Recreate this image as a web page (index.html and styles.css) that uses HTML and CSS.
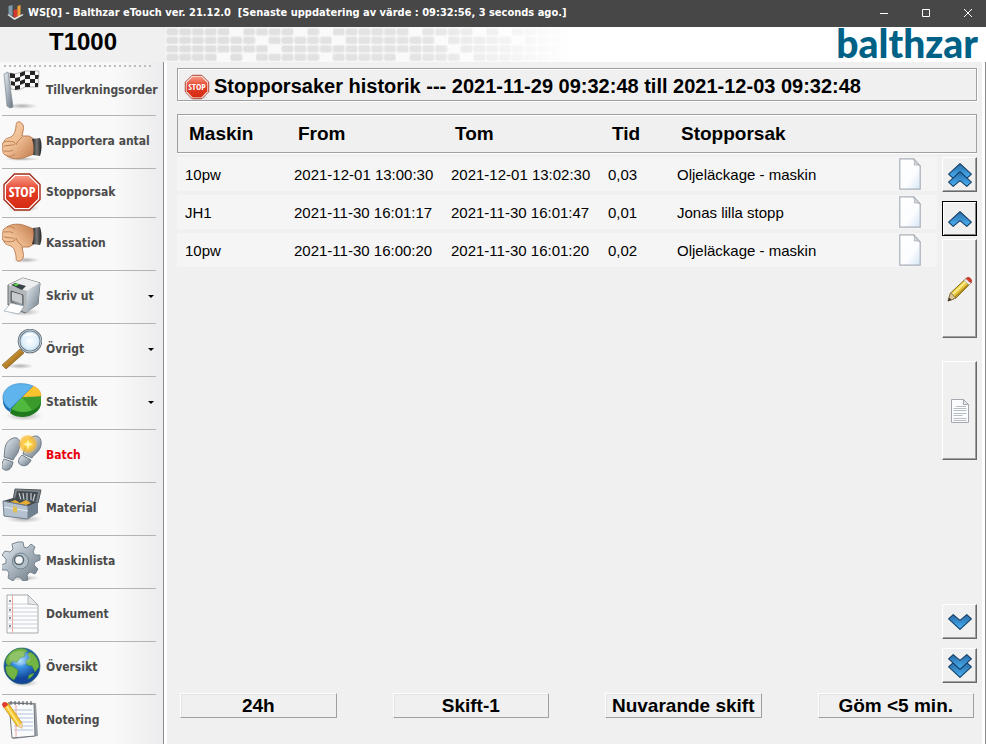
FILE: index.html
```html
<!DOCTYPE html>
<html lang="sv">
<head>
<meta charset="utf-8">
<title>Balthzar eTouch</title>
<link rel="stylesheet" href="styles.css">
</head>
<body>
<svg class="defs" aria-hidden="true">
  <defs>
    <linearGradient id="red" x1="0" y1="0" x2="0" y2="1"><stop offset="0" stop-color="#f79a86"/><stop offset=".45" stop-color="#e5402a"/><stop offset="1" stop-color="#d42a10"/></linearGradient>
    <linearGradient id="skin" x1="0" y1="0" x2="1" y2="1"><stop offset="0" stop-color="#f8d5b0"/><stop offset=".5" stop-color="#efbd92"/><stop offset="1" stop-color="#c07a4c"/></linearGradient>
    <linearGradient id="metal" x1="0" y1="0" x2="1" y2="1"><stop offset="0" stop-color="#e9eef2"/><stop offset=".5" stop-color="#a9b4be"/><stop offset="1" stop-color="#66727e"/></linearGradient>
    <linearGradient id="cuff" x1="0" y1="0" x2="1" y2="0"><stop offset="0" stop-color="#222"/><stop offset=".5" stop-color="#777"/><stop offset="1" stop-color="#222"/></linearGradient>
    <linearGradient id="sheet" x1="0" y1="0" x2="1" y2="1"><stop offset="0" stop-color="#fff"/><stop offset=".6" stop-color="#fcfdff"/><stop offset="1" stop-color="#d5e5f5"/></linearGradient>
    <linearGradient id="blue" x1="0" y1="0" x2="0" y2="1"><stop offset="0" stop-color="#2a6ba6"/><stop offset="1" stop-color="#48b2f6"/></linearGradient>
    <linearGradient id="wood" x1="0" y1="0" x2="1" y2="1"><stop offset="0" stop-color="#f3cf7d"/><stop offset=".5" stop-color="#b98228"/><stop offset="1" stop-color="#6b4312"/></linearGradient>
    <radialGradient id="lens"><stop offset="0" stop-color="#fff"/><stop offset=".7" stop-color="#dceefa"/><stop offset="1" stop-color="#a9cbe2"/></radialGradient>
    <radialGradient id="sea" cx=".45" cy=".35"><stop offset="0" stop-color="#a5dcff"/><stop offset=".4" stop-color="#3a8fe0"/><stop offset="1" stop-color="#12469b"/></radialGradient>
    <radialGradient id="spark"><stop offset="0" stop-color="#fff9c8"/><stop offset=".3" stop-color="#ffcf3d"/><stop offset=".75" stop-color="#f8b830" stop-opacity=".75"/><stop offset="1" stop-color="#ffc845" stop-opacity="0"/></radialGradient>
    <radialGradient id="shade"><stop offset="0" stop-color="#777" stop-opacity=".6"/><stop offset="1" stop-color="#999" stop-opacity="0"/></radialGradient>
    <linearGradient id="fade" x1="0" y1="0" x2="1" y2="0"><stop offset="0" stop-color="#fff" stop-opacity="0"/><stop offset=".6" stop-color="#fff" stop-opacity=".15"/><stop offset=".97" stop-color="#fff"/></linearGradient>
    <pattern id="cells" width="12.8" height="8.5" patternUnits="userSpaceOnUse"><rect x=".5" y="1.500" width="11.6" height="6.800" rx="2.200" fill="#dfdfdf"/></pattern>
    <symbol id="stop" viewBox="0 0 40 40">
      <ellipse cx="21" cy="36" rx="17" ry="4" fill="url(#shade)"/>
      <path d="M12.500 2h15L38 12.500v15L27.500 38h-15L2 27.500v-15z" fill="#fff" stroke="#a32c1b" stroke-width="1.400"/>
      <path d="M13.300 4h13.400L36 13.300v13.400L26.700 36H13.300L4 26.700V13.300z" fill="url(#red)"/>
      <text x="20" y="25" text-anchor="middle" class="stop-text">STOP</text>
    </symbol>
    <symbol id="hand" viewBox="0 0 40 40">
      <path d="M2 21c0-3 4-4 7-5 4-3 4-6 5-10 0-4 1-6 4-5 4 2 4 6 3 9l-1 5h7l5 3v15l-8 3c-7 3-15 2-19-1-4-2-4-3-4-5-1-2-1-3 0-4-1-2-1-4 1-5z" fill="url(#skin)" stroke="#b5754a" stroke-width=".9"/>
      <path d="M2 21c3-1 7-1 10 0 2 1 1 3-2 3l-8 1m0 5c3 0 6 1 9-1m-6 6c3 1 6 0 8-2m7-17c-3 3-5 5-6 8" fill="none" stroke="#bf8055" stroke-width="1"/>
      <path d="M30 18l8-1c2 4 2 12 0 18l-7-1c1-5 1-10-1-16z" fill="url(#cuff)"/>
    </symbol>
    <symbol id="doc" viewBox="0 0 22 32">
      <path d="M.8.800h14L21.200 8v23.200H.8z" fill="url(#sheet)" stroke="#a9b0b8" stroke-width="1.200"/>
      <path d="M14.500.800 21.200 8c-2-1-4-1.300-6-1 .5-2 .3-4-.7-6.200z" fill="#d4d7da" stroke="#a9b0b8" stroke-width=".8"/>
    </symbol>
    <symbol id="chev-up" viewBox="0 0 24 16">
      <path d="M12 .6 23.400 11.200 18.800 15.400 12 9.600 5.200 15.400.6 11.200z" fill="url(#blue)" stroke="#153f68" stroke-width="1.100" stroke-linejoin="round"/>
    </symbol>
    <symbol id="chev-down" viewBox="0 0 24 16">
      <path d="M12 15.400.6 4.800 5.200.6 12 6.400 18.800.6 23.400 4.800z" fill="url(#blue)" stroke="#153f68" stroke-width="1.100" stroke-linejoin="round"/>
    </symbol>
    <symbol id="pencil" viewBox="0 0 26 26">
      <path d="M1 25 3.500 17 19 2.500 24 7 9 22z" fill="#e7c53a" stroke="#7e6316" stroke-width=".9"/>
      <path d="M5.500 18.500 19 5.500" stroke="#fbec8c" stroke-width="2"/>
      <path d="M8 21 22 8" stroke="#a9851e" stroke-width="1.200"/>
      <path d="M1 25 3.500 17l2 1 1 2 2.500 2z" fill="#dcc59b" stroke="#6d5a35" stroke-width=".6"/>
      <path d="M1 25l1-3.500L4.500 24z" fill="#333"/>
      <path d="M17 4.500 19.500 2 24.500 6.500 22 9z" fill="#eee" stroke="#999" stroke-width=".6"/>
      <path d="M19.500 2c2-2 6 1 5 4.500L22.500 6l-3-3z" fill="#dc3a2a" stroke="#a42718" stroke-width=".6"/>
    </symbol>
  </defs>
</svg>

<header class="titlebar">
  <svg class="app-icon" viewBox="0 0 16 18" aria-hidden="true"><path d="M1 2l4-1v11l-4-2z" fill="#7d9bab"/><path d="M6 6l4-1v9l-4-1z" fill="#d8382a"/><path d="M10 2l3-1v11l-3 2z" fill="#f0a13a"/><path d="M0 11l7 5 9-5-1-1-8 4-6-4z" fill="#dfe3e6"/></svg>
  <h1>WS[0] - Balthzar eTouch ver. 21.12.0 &nbsp;[Senaste uppdatering av värde : 09:32:56, 3 seconds ago.]</h1>
  <div class="window-controls">
    <button type="button" aria-label="Minimera"><svg viewBox="0 0 10 10"><path d="M1 5.500h8"/></svg></button>
    <button type="button" aria-label="Maximera"><svg viewBox="0 0 10 10"><path d="M1.500 1.500h7v7h-7z"/></svg></button>
    <button type="button" aria-label="Stäng"><svg viewBox="0 0 10 10"><path d="M1 1l8 8M9 1 1 9"/></svg></button>
  </div>
</header>

<div class="banner">
  <div class="station">T1000</div>
  <svg class="pattern" viewBox="0 0 420 35" aria-hidden="true">
    <rect width="420" height="35" fill="#f5f5f5"/>
    <rect width="420" height="35" fill="url(#cells)"/>
    <g fill="#f9f9f9">
      <path d="M64 0h13v9H64zM128 0h13v9h-13zM154 0h13v9h-13zM243 0h13v9h-13zM307 0h13v9h-13zM333 0h13v9h-13z"/>
      <path d="M90 9h12v9H90zM166 9h13v9h-13zM269 9h13v9h-13zM346 9h13v9h-13z"/>
      <path d="M102 18h13v8h-13zM282 18h12v8h-12z"/>
      <path d="M51 26h13v9H51zM77 26h13v9H77zM154 26h12v9h-12zM230 26h13v9h-13zM294 26h13v9h-13z"/>
    </g>
    <rect width="420" height="35" fill="url(#fade)"/>
  </svg>
  <div class="brand">balthzar</div>
</div>

<div class="workspace">
  <nav class="sidebar" aria-label="Meny">
    <button type="button" class="item compact">
      <svg viewBox="0 0 40 40"><ellipse cx="20" cy="36" rx="16" ry="3" fill="url(#shade)"/><path d="M2 4l4-2 5 35-3 1-3-2z" fill="url(#metal)" stroke="#7c8790" stroke-width=".7"/><path d="M7 3l6 1 10-3 14 0-1 16-13 0-6 3-8-1z" fill="#f7f7f7" stroke="#777" stroke-width=".5"/><path d="M8 3l5 1v4H8zM9 11l4 1v4l-4-1zM13 8l5-1v4l-5 1zM13 16l5-1v4l-5 1zM18 3l5-2v4l-5 2zM18 11l5-2v4l-5 2zM23 5h5v4h-5zM23 13h5v4h-5zM28 1h5v4h-5zM28 9h5v4h-5zM33 5h4l-1 4h-3zM33 13h3v4h-3z" fill="#242424"/></svg>
      <span>Tillverkningsorder</span></button>
    <button type="button" class="item"><svg viewBox="0 0 40 40"><ellipse cx="20" cy="38" rx="18" ry="2" fill="url(#shade)"/><use href="#hand"/></svg><span>Rapportera antal</span></button>
    <button type="button" class="item compact"><svg viewBox="0 0 40 40"><use href="#stop"/></svg><span>Stopporsak</span></button>
    <button type="button" class="item"><svg viewBox="0 0 40 40"><ellipse cx="24" cy="37" rx="14" ry="3" fill="url(#shade)"/><g transform="matrix(1 0 0 -1 0 39)"><use href="#hand" width="40" height="40"/></g></svg><span>Kassation</span></button>
    <button type="button" class="item">
      <svg viewBox="0 0 40 40"><ellipse cx="22" cy="36" rx="17" ry="4" fill="url(#shade)"/><path d="M6 9 21 2l17 5-2 21-13 9L6 29z" fill="#b5b8ba" stroke="#686d70"/><path d="M6 9 21 2l17 5-13 8z" fill="#eceeef"/><path d="M25 15 38 7l-2 21-12 9z" fill="url(#metal)"/><path d="M9 9l4-2 11 3-4 4z" fill="#374349"/><path d="M11 8.500l4-1 2 1-3 1.500z" fill="#59e237"/><path d="M9 15l12 4v12L9 26z" fill="#8d9397" stroke="#555"/><path d="M10 16l10 3v9l-10-4z" fill="#c9ccce"/><path d="M9 27l13 3-5 8-15-3z" fill="#fff" stroke="#95a5b2" stroke-width=".7"/></svg>
      <span>Skriv ut</span><i class="caret"></i></button>
    <button type="button" class="item">
      <svg viewBox="0 0 40 40"><ellipse cx="18" cy="37" rx="14" ry="3" fill="url(#shade)"/><path d="M18 20 22 24 4 40 0 36z" fill="url(#wood)" stroke="#77501a" stroke-width=".6"/><path d="M20 18l3-3 3 3-3 4z" fill="#777"/><circle cx="28" cy="12" r="11" fill="url(#lens)" stroke="#667580" stroke-width="2.600"/><circle cx="28" cy="12" r="11" fill="none" stroke="#c5d0d7" stroke-width="1"/><path d="M20 9c3-6 12-7 16-1-5-2-11-2-16 1z" fill="#fff" opacity=".9"/></svg>
      <span>Övrigt</span><i class="caret"></i></button>
    <button type="button" class="item">
      <svg viewBox="0 0 40 40"><ellipse cx="22" cy="34" rx="19" ry="5" fill="url(#shade)"/><path d="M39 15v6c0 7-7 13-18 14-5 0-9-1-13-4l2-8z" fill="#1f7a1d"/><path d="M20 15l19 0c1 8-7 15-18 15-4 0-8-1-12-3z" fill="#4fb83d"/><path d="M20 15 39 14c1 9-6 13-9 14z" fill="#3a9a2c"/><path d="M20 15 31 4c5 2 8 5 8 10z" fill="#fbc42f" stroke="#d99a16" stroke-width=".5"/><path d="M1 15v6c1 4 3 7 7 9l1-3 11-12z" fill="#1d6fb5"/><path d="M20 15 8 27C-4 19 0 5 14 2c6-1 13 0 17 2z" fill="#5fb4ee" stroke="#3384c5" stroke-width=".6"/></svg>
      <span>Statistik</span><i class="caret"></i></button>
    <button type="button" class="item alert">
      <svg viewBox="0 0 40 40"><g fill="url(#metal)" stroke="#65737e" stroke-width=".9"><path d="M9 4c7-4 11 2 8 10-1 5-4 7-6 11L2 22C3 15 2 8 9 4z"/><path d="M2 24l9 3c-1 6-4 9-8 8s-4-5-1-11z"/><path d="M30 2c6-3 10 1 9 8-1 7-7 9-9 13l-9-4c2-6 2-13 9-17z"/><path d="M20 20l9 5c-2 5-6 7-10 5s-3-6 1-10z"/></g><circle cx="26" cy="9" r="10" fill="url(#spark)"/><path d="M26 4l1 4 4 1-4 2-1 4-1-4-4-2 4-1z" fill="#fff7b0"/></svg>
      <span>Batch</span></button>
    <button type="button" class="item">
      <svg viewBox="0 0 40 40"><ellipse cx="22" cy="31" rx="19" ry="4" fill="url(#shade)"/><path d="M13 1 39 2l-3 13-25-3z" fill="#7d858c" stroke="#535a60"/><path d="M15 3l21 1-2 9-21-2z" fill="#424a50"/><path d="M17 5l2 7M21 5l1 7M25 5v8M29 5v7M33 6l-2 7" stroke="#c5ccd2" stroke-width="1.200"/><path d="M1 13l10-3 25 4-10 5z" fill="#454b4f"/><path d="M8 14l5-2 5 3 6-3 5 3-5 2z" fill="#e8ae34"/><path d="M1 13l25 5v13L2 28z" fill="#b4c2d0" stroke="#6f7e8c"/><path d="M26 18l10-4v11l-10 6z" fill="#71808e"/><path d="M2 19l24 4" stroke="#e4ebf2"/><path d="M11 18l4 1v6l-4-1z" fill="#dfbf52"/></svg>
      <span>Material</span></button>
    <button type="button" class="item">
      <svg viewBox="0 0 40 40"><ellipse cx="22" cy="37" rx="16" ry="3" fill="url(#shade)"/><path d="M16 1l5 0 1 5 3 1 4-4 4 3-2 5 2 3 5 0 0 5-5 2-1 3 4 4-3 5-5-2-3 3 1 5-5 1-3-4-4 0-3 4-5-3 1-5-2-3-5 0-1-5 5-2 0-4-4-4 3-4 5 1 3-3-1-5z" fill="url(#metal)" stroke="#6e7d88" stroke-width=".9"/><circle cx="18.500" cy="20" r="8" fill="#b3bfc8" stroke="#73828e"/><circle cx="17" cy="19" r="4.500" fill="#f6f8f9" stroke="#586670" stroke-width="1.500"/></svg>
      <span>Maskinlista</span></button>
    <button type="button" class="item">
      <svg viewBox="0 0 40 40"><path d="M5 1h21l10 10v28H5z" fill="#fdfdfe" stroke="#a5a9ad"/><path d="M6 10h22M6 14h29M6 18h29M6 22h29M6 26h29M6 30h29M6 34h29" stroke="#bfcbd8" stroke-width=".9"/><path d="M10.500 1v38" stroke="#eea8a0"/><path d="M26 1v9l10 1z" fill="#e6e8ea" stroke="#a5a9ad" stroke-width=".8"/><path d="M7 6h2v2H7zM7 15h2v2H7zM7 23h2v2H7zM7 31h2v2H7z" fill="#8c9298"/></svg>
      <span>Dokument</span></button>
    <button type="button" class="item">
      <svg viewBox="0 0 40 40"><ellipse cx="22" cy="36" rx="15" ry="4" fill="url(#shade)"/><circle cx="20" cy="19" r="18" fill="url(#sea)" stroke="#2a6073" stroke-width=".7"/><path d="M4 12C8 4 15 0 23 2l3 2-4 2 1 3-5 2-3 4-5-1-2 5c-3 0-5-3-4-7zM4 19l6 0 6 4-1 5-3 5C6 30 3 25 4 19zM27 5c6 1 10 8 10 15l-4 5-3-6-5-1-1-4 4-3-2-3zM27 28l5-2c-1 3-3 5-6 6z" fill="#73b544" stroke="#3e8a35" stroke-width=".6"/><ellipse cx="18" cy="11" rx="11" ry="7" fill="#fff" opacity=".2"/></svg>
      <span>Översikt</span></button>
    <button type="button" class="item">
      <svg viewBox="0 0 40 40"><path d="M6 2 34 3l2 33-25 3z" fill="#9aa0a5"/><path d="M7 3l25 1 1 32-23 2z" fill="#fafbfc" stroke="#70767b"/><path d="M11 10h19M11 14h20M11 18h20M12 22h19M12 26h19M12 30h19" stroke="#b3c4dc"/><path d="M14 5v32" stroke="#eda7a0"/><path d="M9 1v4M13 1v4M17 1v4M21 1v4M25 1v4M29 1v4" stroke="#555"/><path d="M1 6 6 3l14 20 0 5-5-2z" fill="#f7c52f" stroke="#c38a12" stroke-width=".7"/><path d="M4 5l13 20" stroke="#fde98a" stroke-width="1.500"/><path d="M15 26l5-3 1 6z" fill="#ecd2a4"/><path d="M0 5c0-3 3-4 5-2l1 2-4 3z" fill="#e23c2c"/></svg>
      <span>Notering</span></button>
  </nav>

  <main class="main">
    <h2 class="panel-title">
      <svg viewBox="0 0 40 40" aria-hidden="true"><use href="#stop"/></svg>
      Stopporsaker historik --- 2021-11-29 09:32:48 till 2021-12-03 09:32:48
    </h2>
    <div class="history">
      <table>
        <colgroup><col class="c-machine"><col class="c-date"><col class="c-date"><col class="c-time"><col><col class="c-doc"><col class="c-tools"></colgroup>
        <thead>
          <tr><th>Maskin</th><th>From</th><th>Tom</th><th>Tid</th><th>Stopporsak</th><th></th><th></th></tr>
        </thead>
        <tbody>
          <tr><td>10pw</td><td>2021-12-01 13:00:30</td><td>2021-12-01 13:02:30</td><td>0,03</td><td>Oljeläckage - maskin</td><td><button type="button" class="note" aria-label="Notering"><svg viewBox="0 0 22 32"><use href="#doc"/></svg></button></td><td></td></tr>
          <tr><td>JH1</td><td>2021-11-30 16:01:17</td><td>2021-11-30 16:01:47</td><td>0,01</td><td>Jonas lilla stopp</td><td><button type="button" class="note" aria-label="Notering"><svg viewBox="0 0 22 32"><use href="#doc"/></svg></button></td><td></td></tr>
          <tr><td>10pw</td><td>2021-11-30 16:00:20</td><td>2021-11-30 16:01:20</td><td>0,02</td><td>Oljeläckage - maskin</td><td><button type="button" class="note" aria-label="Notering"><svg viewBox="0 0 22 32"><use href="#doc"/></svg></button></td><td></td></tr>
        </tbody>
      </table>
      <div class="tools">
        <button type="button" class="tool" aria-label="Första"><svg viewBox="0 0 24 26"><use href="#chev-up" y="1" width="24" height="16"/><use href="#chev-up" y="9" width="24" height="16"/></svg></button>
        <button type="button" class="tool current" aria-label="Upp"><svg viewBox="0 0 24 26"><use href="#chev-up" y="5" width="24" height="16"/></svg></button>
        <button type="button" class="tool tall" aria-label="Redigera"><svg viewBox="0 0 26 26"><use href="#pencil"/></svg></button>
        <button type="button" class="tool tall text" aria-label="Visa text"><svg viewBox="0 0 24 26"><path d="M3.500 1.500h12l5 5v18h-17z" fill="#fbfcfd" stroke="#a3a9af"/><path d="M15.500 1.500v5h5z" fill="#e4e7ea" stroke="#a3a9af"/><path d="M8 8.500h10M5.500 10.500h13M5.500 12.500h13M5.500 15.500h13M5.500 17.500h9M5.500 20.500h13M5.500 22.500h13" stroke="#b9bec4"/></svg></button>
        <button type="button" class="tool down" aria-label="Ned"><svg viewBox="0 0 24 26"><use href="#chev-down" y="5" width="24" height="16"/></svg></button>
        <button type="button" class="tool" aria-label="Sista"><svg viewBox="0 0 24 26"><use href="#chev-down" y="9" width="24" height="16"/><use href="#chev-down" y="1" width="24" height="16"/></svg></button>
      </div>
    </div>
    <div class="filters">
      <button type="button">24h</button>
      <button type="button">Skift-1</button>
      <button type="button">Nuvarande skift</button>
      <button type="button">Göm &lt;5 min.</button>
    </div>
  </main>
</div>
</body>
</html>
```
FILE: styles.css
```css
* {
  box-sizing: border-box;
}

body {
  margin: 0;
  height: 100vh;
  overflow: hidden;
  display: flex;
  flex-direction: column;
  background: #f0f0f0;
  color: #000;
  font-family: "Liberation Sans", Arial, sans-serif;
}

button {
  font: inherit;
  color: inherit;
  padding: 0;
  border: 0;
  background: none;
}

svg {
  display: block;
}

.defs {
  position: absolute;
  width: 0;
  height: 0;
}

.stop-text {
  font: bold 14px "Liberation Sans Narrow", "Open Sans Condensed", Lato, sans-serif;
  fill: #fff;
}

/* Title bar */
.titlebar {
  flex: none;
  display: flex;
  align-items: center;
  gap: 4px;
  height: 27px;
  padding: 0 0 2px 7px;
  background: #474747;
  color: #fff;
}

.titlebar h1 {
  flex: 1;
  margin: 0;
  font: bold 11px "DejaVu Sans Condensed", "DejaVu Sans", sans-serif;
  white-space: nowrap;
}

.app-icon {
  width: 17px;
  height: 18px;
}

.window-controls {
  display: flex;
}

.window-controls button {
  display: grid;
  place-items: center;
  width: 42px;
  height: 24px;
}

.window-controls button:last-child {
  width: 36px;
  margin-left: 3px;
}

.window-controls svg {
  width: 10px;
  height: 10px;
  fill: none;
  stroke: #fff;
}

/* Banner */
.banner {
  flex: none;
  display: flex;
  height: 35px;
  padding-right: 8px;
  background: #fff;
}

.station {
  width: 166px;
  background: #f0f0f0;
  text-align: center;
  font-size: 24px;
  font-weight: bold;
  line-height: 30px;
}

.pattern {
  width: 420px;
  height: 35px;
}

.brand {
  margin-left: auto;
  color: #006187;
  font: 900 39px Lato, sans-serif;
  line-height: 33px;
}

/* Workspace */
.workspace {
  flex: 1;
  min-height: 0;
  display: flex;
  border-right: 1px solid #8a8a8a;
}

.sidebar {
  flex: none;
  width: 164px;
  padding: 3px 7px 0 2px;
  border-right: 1px solid #8c8c90;
  background: linear-gradient(to right, #f9f9f9 70%, #ececee);
}

.sidebar::before {
  content: "";
  display: block;
  height: 2px;
  margin: 0 5px 0 2px;
  background: repeating-linear-gradient(to right, #bdbdbd 0 2px, transparent 2px 5px);
}

.item {
  display: flex;
  align-items: center;
  gap: 4px;
  width: 100%;
  height: 53px;
  padding-bottom: 2px;
  border-bottom: 1px solid #b4b4b4;
  color: #4b4b4b;
  font: bold 12px "DejaVu Sans Condensed", "DejaVu Sans", sans-serif;
  white-space: nowrap;
}

.item svg {
  flex: none;
  width: 40px;
  height: 40px;
}

.compact {
  height: 49px;
}

.alert {
  color: #e8000c;
}

.caret {
  margin-left: auto;
  margin-right: 2px;
  border: 3px solid transparent;
  border-top-color: #000;
  border-bottom: 0;
}

/* Main panel */
.main {
  flex: 1;
  min-width: 0;
  display: flex;
  flex-direction: column;
  padding: 6px 5px 26px 10px;
  border-left: 3px solid #fff;
  border-right: 3px solid #fff;
}

.panel-title {
  flex: none;
  display: flex;
  align-items: center;
  gap: 4px;
  height: 33px;
  margin: 0 0 9px;
  padding: 4px 6px 0;
  border: 1px solid #a0a0a0;
  box-shadow: inset 1px 1px #fff, 1px 1px #fff;
  font-size: 20px;
  white-space: nowrap;
}

.panel-title svg {
  width: 26px;
  height: 26px;
}

.history {
  flex: 1;
  min-height: 0;
  display: grid;
  grid-template-columns: 1fr 35px;
}

table {
  grid-area: 1 / 1 / 2 / 3;
  align-self: start;
  width: 100%;
  table-layout: fixed;
  border-collapse: separate;
  border-spacing: 0 4px;
  text-align: left;
}

.c-machine {
  width: 109px;
}

.c-date {
  width: 157px;
}

.c-time {
  width: 69px;
}

.c-doc {
  width: 47px;
}

.c-tools {
  width: 40px;
}

th {
  height: 39px;
  padding: 0 12px;
  border: solid #a0a0a0;
  border-width: 1px 0;
  box-shadow: inset 0 1px #fff, 0 1px #fff;
  font-size: 19px;
}

th:first-child {
  padding-left: 11px;
  border-left-width: 1px;
}

th:last-child {
  border-right-width: 1px;
}

td {
  height: 34px;
  padding: 0 8px;
  background: #f5f5f5;
  font-size: 15px;
  white-space: nowrap;
}

td:last-child {
  background: none;
}

.note {
  display: block;
}

.note svg {
  width: 24px;
  height: 32px;
}

.tools {
  grid-area: 1 / 2 / 2 / 3;
  display: flex;
  flex-direction: column;
  gap: 9px;
  padding: 47px 0 10px;
}

.tool {
  flex: none;
  display: grid;
  place-items: center;
  height: 35px;
  border: 1px solid;
  border-color: #fff #696969 #696969 #fff;
  box-shadow: inset -1px -1px #a0a0a0;
}

.tool svg {
  width: 26px;
  height: 26px;
}

.tool.current {
  border-color: #000;
  box-shadow: inset 1px 1px #fff, inset -1px -1px #808080;
}

.tool.tall {
  height: 99px;
  margin-top: -6px;
}

.tool.text {
  margin-top: 14px;
}

.tool.down {
  margin-top: auto;
}

/* Filter buttons */
.filters {
  flex: none;
  display: grid;
  grid-template-columns: repeat(4, 1fr);
  gap: 56px;
  padding: 0 3px;
}

.filters button {
  height: 25px;
  border: 1px solid;
  border-color: #fff #a0a0a0 #a0a0a0 #fff;
  box-shadow: inset 1px 1px #e3e3e3;
  font-size: 19px;
  font-weight: bold;
  line-height: 23px;
  white-space: nowrap;
}
```
